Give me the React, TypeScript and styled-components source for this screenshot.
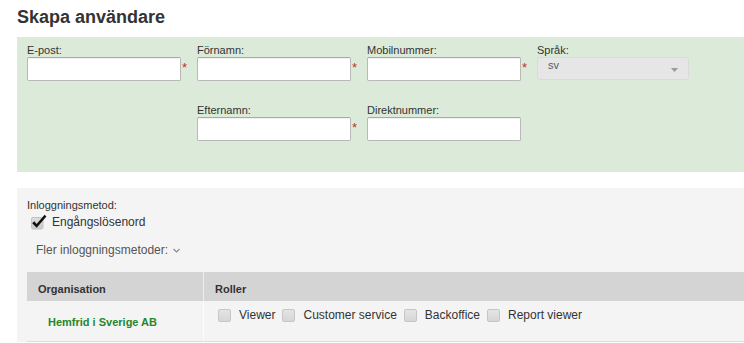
import React from "react";
import styled, { createGlobalStyle } from "styled-components";

const GlobalStyle = createGlobalStyle`
  html, body { margin: 0; padding: 0; background: #ffffff; }
  body {
    font-family: "Liberation Sans", Arial, Helvetica, sans-serif;
    color: #333333;
    overflow: hidden;
  }
  * { box-sizing: border-box; }
`;

const Page = styled.div`
  padding-left: 17px;
`;

const Title = styled.h1`
  margin: 7px 0 9px;
  font-size: 18px;
  line-height: 21px;
  font-weight: bold;
  color: #333333;
`;

const FormPanel = styled.div`
  background: #dcebd9;
  padding: 7px 0 31px 10px;
  display: grid;
  grid-template-columns: repeat(4, 170px);
  row-gap: 23px;
`;

const Field = styled.div<{ $start?: number }>`
  display: flex;
  flex-direction: column;
  grid-column-start: ${(p) => p.$start ?? "auto"};
`;

const FieldLabel = styled.label`
  font-size: 11px;
  line-height: 13px;
  color: #333333;
`;

const InputRow = styled.div`
  display: flex;
  align-items: flex-start;
`;

const TextInput = styled.input`
  width: 154px;
  height: 24px;
  margin: 0;
  padding: 0 6px;
  background: #ffffff;
  border: 1px solid #b8b8b8;
  border-top-color: #a9a9a9;
  border-radius: 2px;
  box-shadow: inset 0 1px 1px rgba(0, 0, 0, 0.06);
  font-family: inherit;
  font-size: 12px;
  outline: none;
`;

const Required = styled.span`
  color: #c0302b;
  font-size: 13px;
  line-height: 13px;
  margin: 4px 0 0 1px;
`;

const SelectBox = styled.div`
  width: 152px;
  height: 23px;
  background: #e6e6e6;
  border: 1px solid #dadada;
  border-radius: 3px;
  display: flex;
  justify-content: space-between;
  align-items: flex-start;
  padding: 1px 10px 0 10px;
  font-size: 11px;
  line-height: 13px;
  color: #5a5a5a;
`;

const SelectArrow = styled.svg`
  align-self: center;
  width: 7px;
  height: 4px;
  margin-top: 1px;
`;

const GreyPanel = styled.section`
  margin-top: 16px;
  background: #f4f4f4;
  padding: 11px 0 0 10px;
`;

const MethodLabel = styled.div`
  font-size: 11px;
  line-height: 13px;
  color: #333333;
`;

const CheckedRow = styled.label`
  display: flex;
  align-items: center;
  gap: 5px;
  margin: 2px 0 0 4px;
  font-size: 12px;
  line-height: 16px;
  color: #333333;
`;

const MoreToggle = styled.button`
  display: flex;
  align-items: center;
  gap: 5px;
  margin: 12px 0 0 9px;
  padding: 0;
  border: 0;
  background: none;
  font-family: inherit;
  font-size: 12px;
  line-height: 16px;
  color: #555555;
  cursor: pointer;
`;

const Table = styled.div`
  margin-top: 14px;
  display: grid;
  grid-template-columns: 176px 1fr;
`;

const HeaderCell = styled.div<{ $divider?: boolean }>`
  background: #d4d4d4;
  padding: 11px 11px 5px;
  height: 29px;
  font-size: 11px;
  line-height: 13px;
  font-weight: bold;
  color: #333333;
  border-left: ${(p) => (p.$divider ? "1px solid #ededed" : "none")};
`;

const OrgCell = styled.div`
  height: 41px;
  padding: 15px 0 0 21px;
  border-bottom: 1px solid #dcdcdc;
  font-size: 11px;
  line-height: 13px;
  font-weight: bold;
  color: #23882c;
`;

const RolesCell = styled.div`
  height: 41px;
  padding: 7px 14px 0;
  border-left: 1px solid #fcfcfc;
  border-bottom: 1px solid #dcdcdc;
  display: flex;
  align-items: flex-start;
`;

const Role = styled.label`
  display: flex;
  align-items: flex-start;
  margin-right: 7px;
  font-size: 12px;
  line-height: 14px;
  color: #333333;
`;

const Box = styled.span`
  width: 13px;
  height: 13px;
  margin: 1px 8px 0 0;
  border: 1px solid #c6c6c6;
  border-radius: 2px;
  background: linear-gradient(#e4e4e4, #d6d6d6);
`;

const CheckIcon = () => (
  <svg width="16" height="16" viewBox="0 0 16 16">
    <defs>
      <linearGradient id="cbg" x1="0" y1="0" x2="0" y2="1">
        <stop offset="0" stopColor="#dedede" />
        <stop offset="1" stopColor="#c9c9c9" />
      </linearGradient>
    </defs>
    <rect x="0.5" y="3.5" width="11.5" height="11.5" rx="1.5" fill="url(#cbg)" stroke="#c2c2c2" />
    <path d="M1.2 9.2 L3.3 7.2 L5.6 10 L13.6 0.8 L15.4 2.4 L5.7 13.8 Z" fill="#111111" />
  </svg>
);

const fieldsRow1 = [
  { label: "E-post:", required: true },
  { label: "Förnamn:", required: true },
  { label: "Mobilnummer:", required: true },
];

const roles = ["Viewer", "Customer service", "Backoffice", "Report viewer"];

export default function App() {
  return (
    <>
      <GlobalStyle />
      <Page>
        <Title>Skapa användare</Title>
        <FormPanel>
          {fieldsRow1.map((f) => (
            <Field key={f.label}>
              <FieldLabel>{f.label}</FieldLabel>
              <InputRow>
                <TextInput type="text" />
                {f.required && <Required>*</Required>}
              </InputRow>
            </Field>
          ))}
          <Field>
            <FieldLabel>Språk:</FieldLabel>
            <SelectBox>
              <span>sv</span>
              <SelectArrow viewBox="0 0 7 4">
                <path d="M0 0 L7 0 L3.5 4 Z" fill="#9a9a9a" />
              </SelectArrow>
            </SelectBox>
          </Field>
          <Field $start={2}>
            <FieldLabel>Efternamn:</FieldLabel>
            <InputRow>
              <TextInput type="text" />
              <Required>*</Required>
            </InputRow>
          </Field>
          <Field>
            <FieldLabel>Direktnummer:</FieldLabel>
            <InputRow>
              <TextInput type="text" />
            </InputRow>
          </Field>
        </FormPanel>

        <GreyPanel>
          <MethodLabel>Inloggningsmetod:</MethodLabel>
          <CheckedRow>
            <CheckIcon />
            Engångslösenord
          </CheckedRow>
          <MoreToggle type="button">
            Fler inloggningsmetoder:
            <svg width="7" height="5" viewBox="0 0 7 5">
              <path d="M0.5 1 L3.5 4 L6.5 1" fill="none" stroke="#8a8a8a" strokeWidth="1.1" />
            </svg>
          </MoreToggle>
          <Table>
            <HeaderCell>Organisation</HeaderCell>
            <HeaderCell $divider>Roller</HeaderCell>
            <OrgCell>Hemfrid i Sverige AB</OrgCell>
            <RolesCell>
              {roles.map((r) => (
                <Role key={r}>
                  <Box />
                  {r}
                </Role>
              ))}
            </RolesCell>
          </Table>
        </GreyPanel>
      </Page>
    </>
  );
}
